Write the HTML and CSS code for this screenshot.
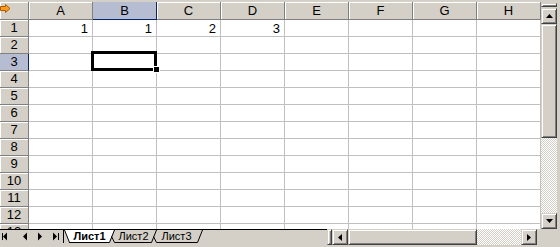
FILE: index.html
```html
<!DOCTYPE html>
<html lang="ru">
<head>
<meta charset="utf-8">
<title>Лист1</title>
<link rel="stylesheet" href="styles.css">
</head>
<body>
<div class="excel">
  <div class="top">
    <div class="sheet">
      <div class="h corner">
        <svg class="sel-all" width="11" height="9" viewBox="0 0 11 9"><polygon points="0.5,2.5 5.5,2.5 5.5,0.5 10,4.5 5.5,8.5 5.5,6.5 0.5,6.5" fill="#ff9c1a" stroke="#b05a00" stroke-width="1"/></svg>
      </div>
      <div class="h">A</div><div class="h hl">B</div><div class="h">C</div><div class="h">D</div><div class="h">E</div><div class="h">F</div><div class="h">G</div><div class="h">H</div>

      <div class="rh">1</div><div class="c">1</div><div class="c">1</div><div class="c">2</div><div class="c">3</div><div class="c"></div><div class="c"></div><div class="c"></div><div class="c"></div>
      <div class="rh">2</div><div class="c"></div><div class="c"></div><div class="c"></div><div class="c"></div><div class="c"></div><div class="c"></div><div class="c"></div><div class="c"></div>
      <div class="rh hl">3</div><div class="c"></div><div class="c"></div><div class="c"></div><div class="c"></div><div class="c"></div><div class="c"></div><div class="c"></div><div class="c"></div>
      <div class="rh">4</div><div class="c"></div><div class="c"></div><div class="c"></div><div class="c"></div><div class="c"></div><div class="c"></div><div class="c"></div><div class="c"></div>
      <div class="rh">5</div><div class="c"></div><div class="c"></div><div class="c"></div><div class="c"></div><div class="c"></div><div class="c"></div><div class="c"></div><div class="c"></div>
      <div class="rh">6</div><div class="c"></div><div class="c"></div><div class="c"></div><div class="c"></div><div class="c"></div><div class="c"></div><div class="c"></div><div class="c"></div>
      <div class="rh">7</div><div class="c"></div><div class="c"></div><div class="c"></div><div class="c"></div><div class="c"></div><div class="c"></div><div class="c"></div><div class="c"></div>
      <div class="rh">8</div><div class="c"></div><div class="c"></div><div class="c"></div><div class="c"></div><div class="c"></div><div class="c"></div><div class="c"></div><div class="c"></div>
      <div class="rh">9</div><div class="c"></div><div class="c"></div><div class="c"></div><div class="c"></div><div class="c"></div><div class="c"></div><div class="c"></div><div class="c"></div>
      <div class="rh">10</div><div class="c"></div><div class="c"></div><div class="c"></div><div class="c"></div><div class="c"></div><div class="c"></div><div class="c"></div><div class="c"></div>
      <div class="rh">11</div><div class="c"></div><div class="c"></div><div class="c"></div><div class="c"></div><div class="c"></div><div class="c"></div><div class="c"></div><div class="c"></div>
      <div class="rh">12</div><div class="c"></div><div class="c"></div><div class="c"></div><div class="c"></div><div class="c"></div><div class="c"></div><div class="c"></div><div class="c"></div>
      <div class="rh">13</div><div class="c"></div><div class="c"></div><div class="c"></div><div class="c"></div><div class="c"></div><div class="c"></div><div class="c"></div><div class="c"></div>

      <div class="selection"></div>
      <div class="fill-handle"></div>
    </div>
    <div class="vscroll">
      <div class="split raised"></div>
      <div class="btn raised"><svg width="7" height="4" viewBox="0 0 7 4"><polygon points="3.5,0 7,4 0,4" fill="#000"/></svg></div>
      <div class="vthumb raised"></div>
      <div class="track"></div>
      <div class="btn raised"><svg width="7" height="4" viewBox="0 0 7 4"><polygon points="0,0 7,0 3.5,4" fill="#000"/></svg></div>
    </div>
    <div class="edge"></div>
  </div>
  <div class="bottom">
    <div class="tabbar">
      <div class="nav">
        <svg width="63" height="13" viewBox="0 0 63 13">
          <rect x="2" y="3" width="1" height="7" fill="#000"/>
          <polygon points="7,2.5 7,10.5 3,6.5" fill="#000"/>
          <polygon points="27,2.5 27,10.5 23,6.5" fill="#000"/>
          <polygon points="38,2.5 38,10.5 42,6.5" fill="#000"/>
          <polygon points="53,2.5 53,10.5 57,6.5" fill="#000"/>
          <rect x="58" y="3" width="1" height="7" fill="#000"/>
        </svg>
      </div>
      <svg class="tedge" width="7" height="13" viewBox="0 0 7 13"><polygon points="0,0 7,0 7,12 5,12" fill="#fff"/><path d="M0.5 0 L5.5 12.5 M5 12.5 H7" stroke="#000" stroke-width="1" fill="none"/></svg>
      <div class="tab active">Лист1</div>
      <svg class="tedge" width="7" height="13" viewBox="0 0 7 13"><polygon points="0,0 6,0 1,12 0,12" fill="#fff"/><path d="M0 12.5 H1.5 L6.5 0 M3.5 6.5 L6.5 12.5 H7" stroke="#000" stroke-width="1" fill="none"/></svg>
      <div class="tab t2">Лист2</div>
      <svg class="tedge" width="7" height="13" viewBox="0 0 7 13"><path d="M0 12.5 H1.5 L6.5 0 M3.5 6.5 L6.5 12.5 H7" stroke="#000" stroke-width="1" fill="none"/></svg>
      <div class="tab t3">Лист3</div>
      <svg class="tedge" width="7" height="13" viewBox="0 0 7 13"><path d="M0 12.5 H1.5 L6.5 0" stroke="#000" stroke-width="1" fill="none"/></svg>
      <div class="filler"></div>
    </div>
    <div class="splitter raised"></div>
    <div class="hscroll">
      <div class="btn raised"><svg width="4" height="7" viewBox="0 0 4 7"><polygon points="4,0 4,7 0,3.5" fill="#000"/></svg></div>
      <div class="hthumb raised"></div>
      <div class="track"></div>
      <div class="btn raised"><svg width="4" height="7" viewBox="0 0 4 7"><polygon points="0,0 0,7 4,3.5" fill="#000"/></svg></div>
    </div>
    <div class="gap"></div>
    <div class="corner-box"></div>
  </div>
</div>
</body>
</html>
```
FILE: styles.css
```css
* { box-sizing: border-box; }
html, body { margin: 0; padding: 0; background: #d4d0c8; }
body { font-family: "Liberation Sans", Arial, sans-serif; }

.excel {
  width: 560px;
  height: 247px;
  background: #d4d0c8;
  overflow: hidden;
  display: flex;
  flex-direction: column;
}

.top { display: flex; height: 229px; }

.sheet {
  position: relative;
  width: 541px;
  height: 229px;
  overflow: hidden;
  padding-top: 2px;
  display: grid;
  grid-template-columns: 29px repeat(8, 64px);
  grid-template-rows: 18px;
  grid-auto-rows: 17px;
  align-content: start;
}

.h, .rh {
  background: #d4d0c8;
  border-right: 1px solid #808080;
  border-bottom: 1px solid #808080;
  box-shadow: inset 1px 1px #ffffff;
  font-size: 13px;
  text-align: center;
  color: #000;
}
.h { line-height: 17px; }
.rh { line-height: 16px; }
.h.hl { background: #b6bdd2; border-right-color: #0a246a; border-bottom-color: #0a246a; box-shadow: none; }
.rh.hl { background: #b6bdd2; border-right-color: #0a246a; box-shadow: none; }

.corner { position: relative; }
.sel-all { position: absolute; left: 0; top: 2px; }

.c {
  background: #fff;
  border-right: 1px solid #c0c0c0;
  border-bottom: 1px solid #c0c0c0;
  font-size: 13px;
  line-height: 15px;
  padding: 1px 4px 0 0;
  text-align: right;
  color: #000;
}

.selection {
  position: absolute;
  left: 91px;
  top: 51px;
  width: 66px;
  height: 20px;
  border: 3px solid #000;
}
.fill-handle {
  position: absolute;
  left: 153px;
  top: 66px;
  width: 7px;
  height: 7px;
  background: #000;
  border: 1px solid #fff;
}

.raised {
  background: #d4d0c8;
  border: 1px solid;
  border-color: #d4d0c8 #404040 #404040 #d4d0c8;
  box-shadow: inset 1px 1px #ffffff, inset -1px -1px #808080;
}

.vscroll {
  width: 16px;
  display: flex;
  flex-direction: column;
  padding-top: 3px;
}
.split { height: 4px; margin-bottom: 1px; }
.btn { display: flex; align-items: center; justify-content: center; flex: none; }
.vscroll .btn { height: 16px; }
.vthumb { height: 114px; flex: none; }
.track {
  flex: 1;
  background-color: #ffffff;
  background-image: repeating-conic-gradient(#d4d0c8 0 25%, #ffffff 0 50%);
  background-size: 2px 2px;
}
.edge { width: 3px; }

.bottom { display: flex; height: 18px; }

.tabbar {
  width: 327px;
  height: 14px;
  border-top: 1px solid #000;
  display: flex;
  align-items: flex-start;
}
.nav { width: 64px; height: 13px; border-right: 1px solid #000; flex: none; }
.nav svg { display: block; }
.tedge { display: block; flex: none; }
.tab {
  height: 13px;
  border-bottom: 1px solid #000;
  font-size: 11px;
  line-height: 12px;
  text-align: center;
  flex: none;
  white-space: nowrap;
}
.tab.active { background: #fff; font-weight: bold; width: 37px; }
.tab.t2 { width: 35px; padding-left: 2px; }
.tab.t3 { width: 39px; }
.filler { flex: 1; }

.splitter { width: 5px; height: 16px; }

.hscroll { display: flex; width: 205px; height: 16px; }
.hscroll .btn { width: 16px; }
.hthumb { width: 129px; flex: none; }

.gap { width: 4px; }
.corner-box { width: 16px; }
```
